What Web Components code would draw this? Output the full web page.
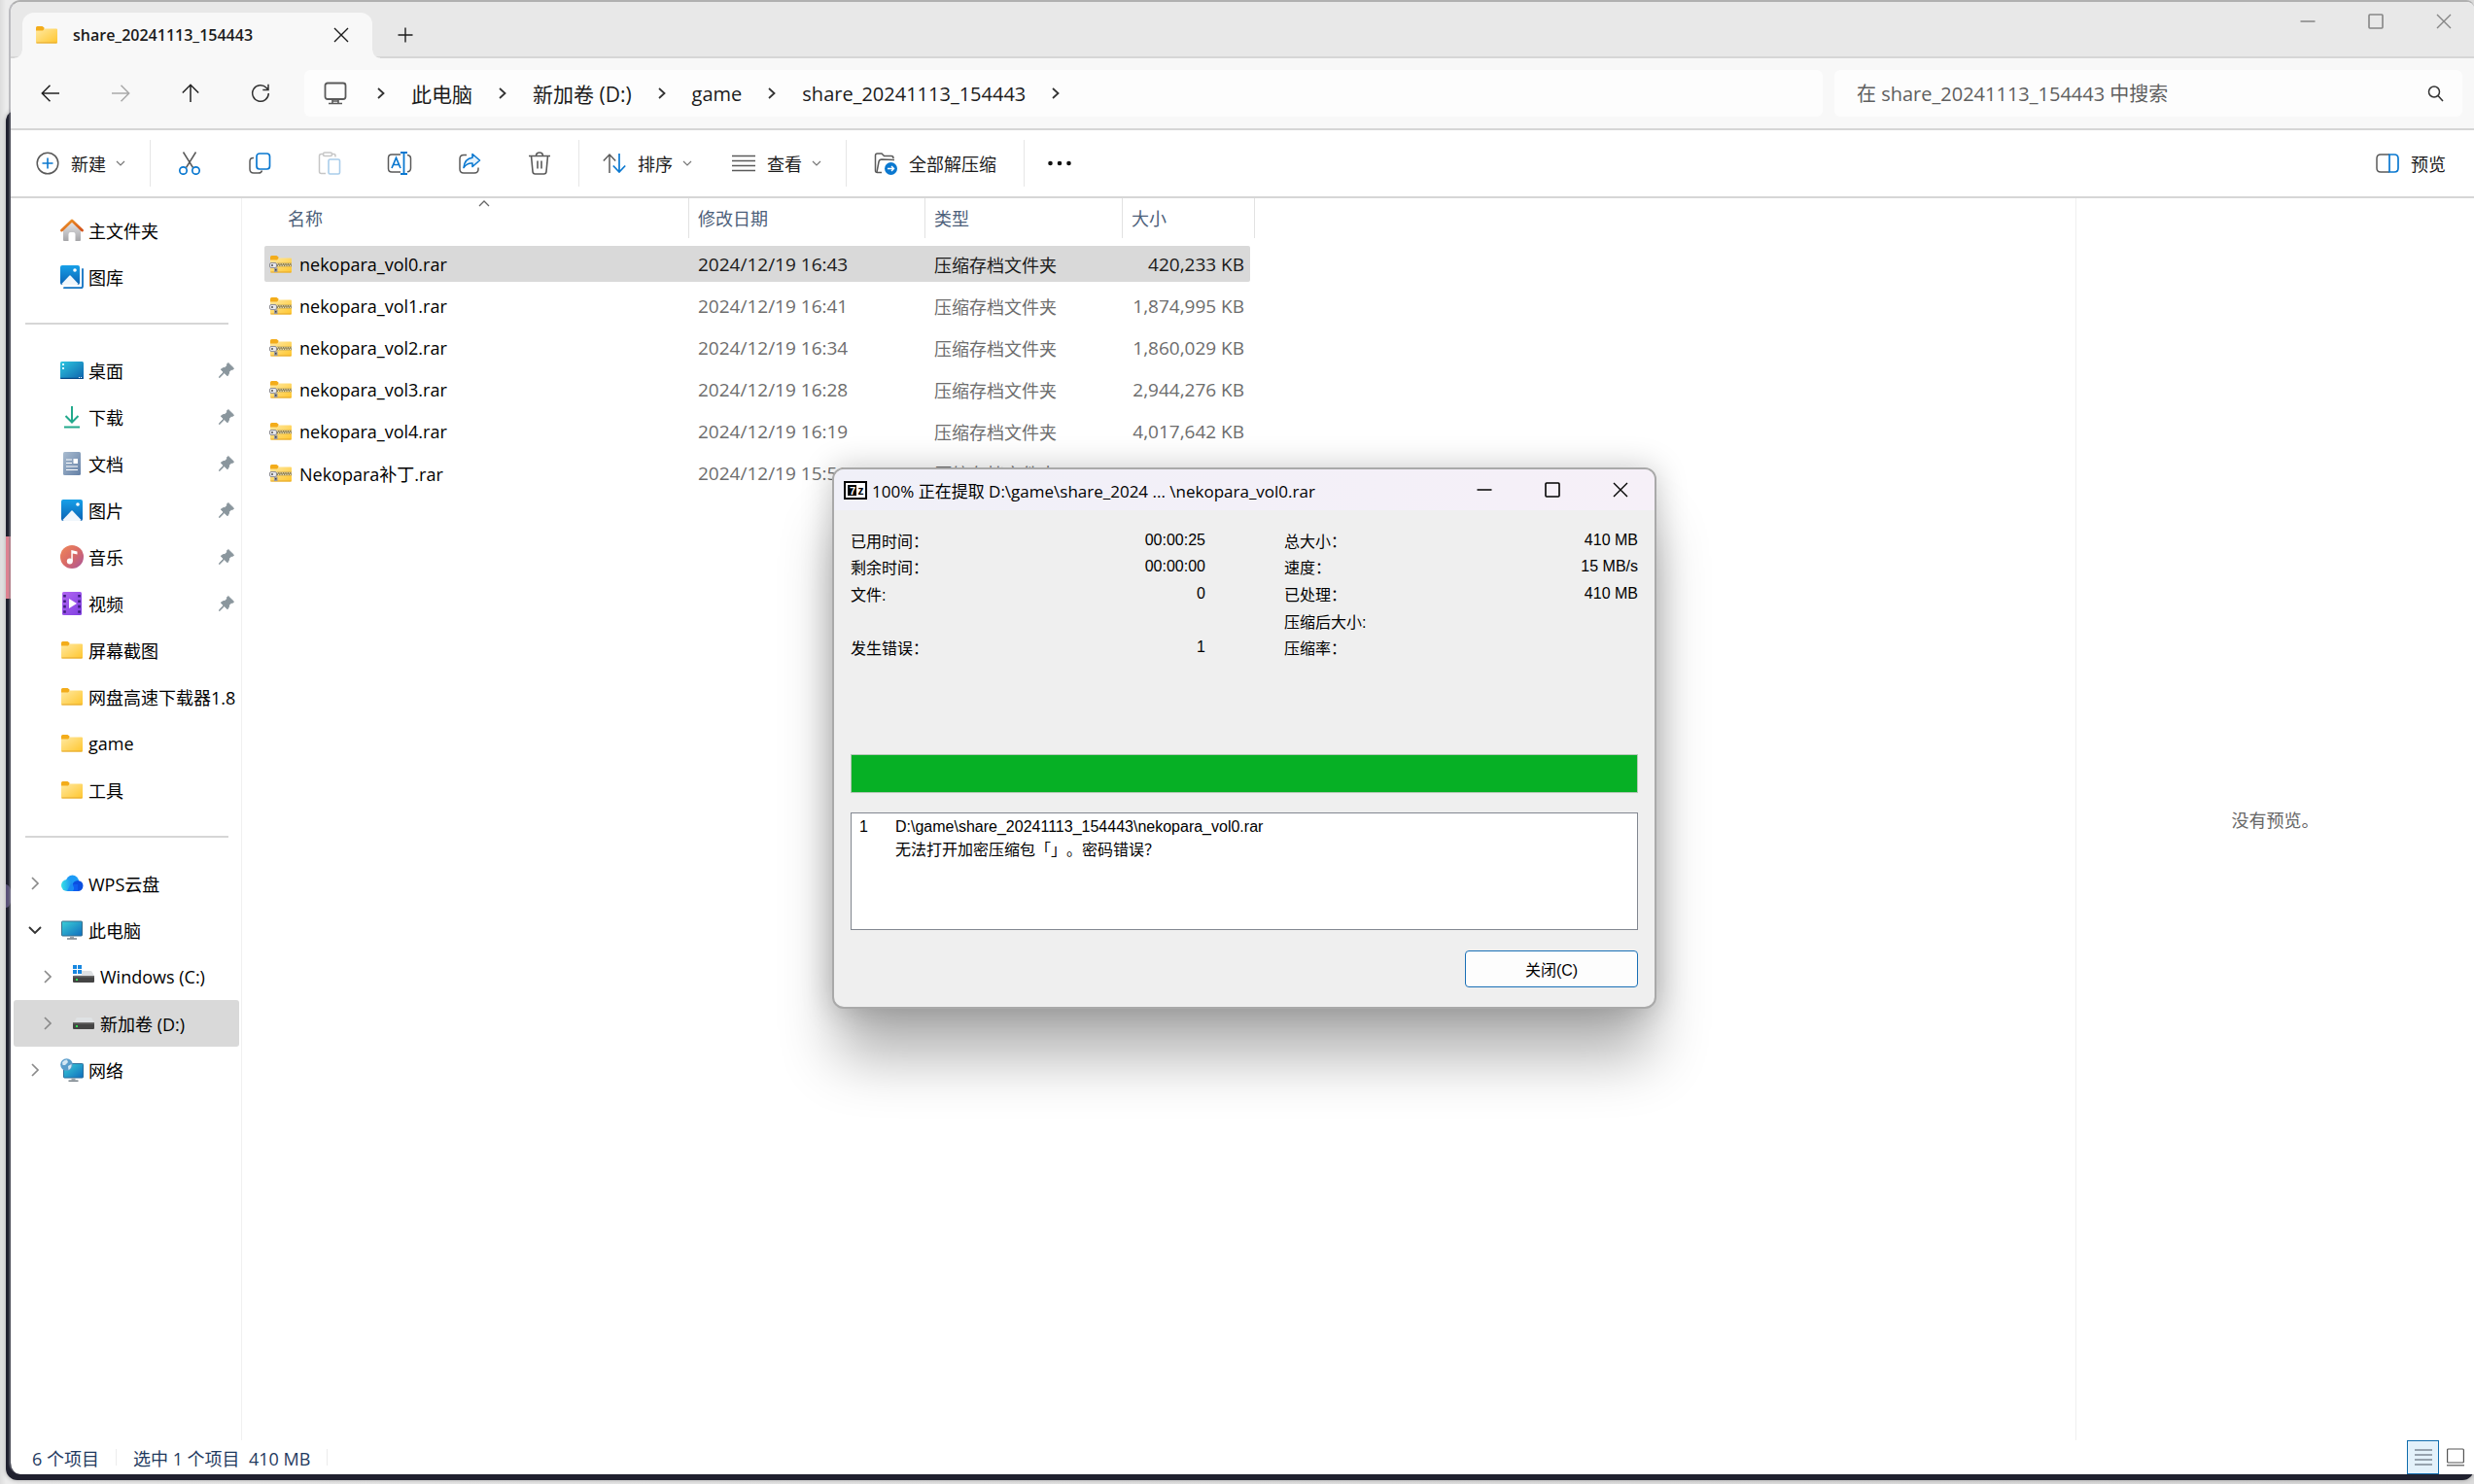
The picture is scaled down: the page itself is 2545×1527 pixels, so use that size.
<!DOCTYPE html>
<html lang="zh-CN">
<head>
<meta charset="utf-8">
<title>share_20241113_154443</title>
<style>
  html, body { margin: 0; height: 100%; }
  body {
    font-family: "Open Sans", "Noto Sans CJK SC", sans-serif;
    font-size: 18px; color: #1b1b1b;
    background: #dedede;
    overflow: hidden;
  }
</style>
</head>
<body>
<desktop-stage>
  <explorer-window>
    <explorer-titlebar slot="title">share_20241113_154443</explorer-titlebar>
    <explorer-navbar slot="nav"></explorer-navbar>
    <explorer-toolbar slot="tools"></explorer-toolbar>
    <explorer-sidebar slot="side"></explorer-sidebar>
    <file-table slot="main"></file-table>
    <preview-pane slot="preview">没有预览。</preview-pane>
    <status-bar slot="status"></status-bar>
  </explorer-window>
  <extract-dialog slot="dialog">100% 正在提取 D:\game\share_2024 ... \nekopara_vol0.rar</extract-dialog>
</desktop-stage>

<script>
const BASE = `*,:host{box-sizing:border-box}
button{font:inherit;color:inherit;background:none;border:0;padding:0;margin:0;display:flex;align-items:center;justify-content:center}
a{color:inherit;text-decoration:none}`;

function define(name, css, html) {
  customElements.define(name, class extends HTMLElement {
    constructor() {
      super();
      const root = this.attachShadow({ mode: 'open' });
      const t = document.createElement('template');
      t.innerHTML = `<style>${BASE}${css}</style>${html}`;
      root.append(t.content.cloneNode(true));
    }
  });
}

/* ---------- icons: [width, height, markup] ---------- */
const G = '#5a5a5a', B = '#0a78d0';
const folderBody = `<defs><linearGradient id="f" x1="0" y1="0" x2="1" y2="1"><stop offset="0" stop-color="#ffe9a2"/><stop offset="1" stop-color="#ffc62e"/></linearGradient></defs>
<path d="M0 1.500Q0 0 1.500 0H6.500L8.500 1.500V5H0Z" fill="#f3ac1a"/>
<path d="M0 4.500H7L9 2.500H21Q22 2.500 22 3.500V16.500Q22 17.500 21 17.500H1Q0 17.500 0 16.500Z" fill="url(#f)"/><path d="M.5 17H21.500" stroke="#e2a52b" stroke-width="1"/>`;
const picture = (s) => `<defs><linearGradient id="p" x1="0" y1="0" x2="0" y2="1"><stop offset="0" stop-color="#17a0e8"/><stop offset="1" stop-color="#0a62b4"/></linearGradient></defs>
<rect x="1" y="1" width="${s}" height="${s}" rx="2" fill="url(#p)"/><path d="M2.500 ${s}L${s / 2 + .500} ${s / 2 + 1.500}Q${s / 2 + 1} ${s / 2 + 1} ${s / 2 + 1.500} ${s / 2 + 1.500}L${s - .500} ${s}Q${s - 1} ${s + 1} ${s - 2} ${s + 1}H4Q3 ${s + 1} 2.500 ${s}Z" fill="#f0f6fc"/><circle cx="${s - 4}" cy="6" r="1.800" fill="#fff"/>`;
const drive = `<path d="M1 10L4 5H19L22 10Z" fill="#dfe2e4"/><rect x="0" y="10" width="22" height="7" rx="1" fill="#444"/><rect x="0" y="10" width="22" height="1.500" fill="#6c6c6c"/><rect x="3" y="13" width="2" height="2" fill="#32e052"/>`;
const monitor = `<defs><linearGradient id="m" x1="0" y1="0" x2="1" y2="1"><stop offset="0" stop-color="#3bd0d8"/><stop offset="1" stop-color="#0f6cbd"/></linearGradient></defs>`;
const ICONS = {
  folder: [22, 18, folderBody],
  rar: [24, 18, `<g transform="translate(1 0)">${folderBody}</g>
    <path d="M8 9.500H23" stroke="#8a7a48" stroke-width="3.500"/><path d="M8 8.800H23M9 10.400H23" stroke="#efe7c4" stroke-width="1.100" stroke-dasharray="1.200 1.200"/>
    <rect x=".5" y="7.500" width="7" height="5" rx="1.500" fill="#e7e7ea" stroke="#8f8f96"/><rect x="2" y="9" width="2" height="2" fill="#777"/><path d="M5 12.500h3.500v4.500H5z" fill="#9a9aa0"/><rect x="6" y="14" width="1.500" height="1.500" fill="#444"/>`],
  home: [24, 24, `<defs><linearGradient id="h" x1="0" y1="0" x2="0" y2="1"><stop offset="0" stop-color="#e4e4e6"/><stop offset="1" stop-color="#a5a5a8"/></linearGradient><linearGradient id="r" x1="0" y1="0" x2="1" y2="1"><stop offset="0" stop-color="#f09a2a"/><stop offset="1" stop-color="#d2521a"/></linearGradient></defs>
    <path d="M3 12L12 4L21 12V22Q21 23 20 23H15.500V16Q15.500 14 13.500 14H10.500Q8.500 14 8.500 16V23H4Q3 23 3 22Z" fill="url(#h)"/><path d="M1.500 12L12 2L22.500 12" fill="none" stroke="url(#r)" stroke-width="2.800" stroke-linecap="round" stroke-linejoin="round"/>`],
  gallery: [24, 24, `<path d="M23 4V21.500Q23 23.200 21.500 23.200H4" fill="none" stroke="#1172c2" stroke-width="1.800" stroke-linecap="round"/><g transform="translate(-1 -1)">${picture(20)}</g>`],
  pictures: [24, 24, picture(22)],
  desktop: [24, 18, `<defs><linearGradient id="d" x1="0" y1="0" x2="1" y2="1"><stop offset="0" stop-color="#2fc7e0"/><stop offset="1" stop-color="#0d62ac"/></linearGradient></defs><rect width="24" height="18" rx="1.500" fill="url(#d)"/><path d="M2 2h2v2H2zM2 6h2v2H2z" fill="#d8fbff"/><path d="M0 16.800H24V17Q24 18 23 18H1Q0 18 0 17Z" fill="#0b4a86"/><path d="M19 16.500h1M21 16.500h1" stroke="#fff"/>`],
  download: [24, 24, `<g fill="none" stroke="#22a98c" stroke-width="2"><path d="M12 1V17M5.500 11L12 17.500L18.500 11M4 22.500H20"/></g>`],
  document: [24, 24, `<defs><linearGradient id="o" x1="0" y1="0" x2="1" y2="1"><stop offset="0" stop-color="#a9bcd0"/><stop offset="1" stop-color="#6480a6"/></linearGradient></defs><rect x="3" y="0" width="18" height="24" rx="1.500" fill="url(#o)"/><path d="M6 8H12M6 11.500H12M6 15H18M6 18.500H18" stroke="#fff" stroke-width="1.200"/><rect x="13.500" y="7" width="4.500" height="5" fill="#fff"/>`],
  music: [24, 24, `<defs><linearGradient id="u" x1="0" y1="0" x2="1" y2="1"><stop offset="0" stop-color="#f0895a"/><stop offset=".5" stop-color="#d96a66"/><stop offset="1" stop-color="#a8569e"/></linearGradient></defs><circle cx="12" cy="12" r="12" fill="url(#u)"/><circle cx="9.800" cy="16.500" r="3" fill="#fff"/><path d="M11.300 5V16.500H12.800V8.500L17.500 9.500V6.500Z" fill="#fff"/>`],
  video: [24, 24, `<defs><linearGradient id="v" x1="0" y1="0" x2="1" y2="1"><stop offset="0" stop-color="#b266f2"/><stop offset="1" stop-color="#7f3fe0"/></linearGradient></defs><rect x="2" y="0" width="20" height="24" rx="1.500" fill="url(#v)"/><path d="M4.500 3V24M19.500 3V24" stroke="#3d1d80" stroke-width="2.600" stroke-dasharray="2.600 2.800"/><path d="M9 7L17 12L9 17Z" fill="#fff"/>`],
  cloud: [24, 18, `<defs><linearGradient id="c" x1="0" y1="0" x2="1" y2="0"><stop offset="0" stop-color="#35e0e6"/><stop offset="1" stop-color="#1b8cf2"/></linearGradient></defs><circle cx="12.500" cy="7" r="6.500" fill="#1c9bf6"/><circle cx="18" cy="11.500" r="5.500" fill="#0b4fe0"/><path d="M9 10H18V17H9Z" fill="#0f5ef0"/><circle cx="7" cy="11" r="6" fill="url(#c)"/><path d="M7 17L13 17Q16 13 11 9Z" fill="#1b8cf2"/>`],
  pc: [24, 20, `${monitor}<rect x="1.500" y="1" width="21" height="15" rx=".8" fill="url(#m)" stroke="#3b6f8c"/><path d="M10 16.500h4v2h-4z" fill="#9aa4ab"/><path d="M7 19H17" stroke="#6d7880" stroke-width="1.400"/>`],
  network: [24, 24, `${monitor}<rect x="3.500" y="5.500" width="20" height="14.500" rx=".8" fill="url(#m)" stroke="#2c6f9c"/><path d="M11.500 20.500h4v2h-4z" fill="#9aa4ab"/><path d="M8.500 23.200H18.500" stroke="#6d7880" stroke-width="1.400"/><circle cx="6.500" cy="6.500" r="6.300" fill="#5b9dcb"/><path d="M2 4Q4 1 7 1.500L8 4L5 7L2.500 7ZM8 8L11.500 6Q12 10 8.500 12Z" fill="#d3e6f3"/>`],
  windrive: [24, 24, `<g transform="translate(1 1)">${drive}</g><path d="M0 0H10V10H0Z" fill="#fff"/><path d="M1 0h4v4H1zM6 0h4v4H6zM1 5h4v4H1zM6 5h4v4H6z" fill="#1787e0"/>`],
  drive: [24, 24, `<g transform="translate(1 1)">${drive}</g>`],
  pin: [18, 18, `<path d="M10.800 1.500L16.500 7L15.200 8.500Q14.200 8 13.500 8.700L11.800 10.400Q11.500 13 10 14.800L6.800 11.600L2.200 16.200L1.500 16.500L1.700 15.500L6.100 11L3.300 8.100Q5 6.500 7.500 6.300L9.200 4.600Q9.900 3.800 9.500 2.800Z" fill="#8a969d" stroke="#8a969d" stroke-linejoin="round"/>`],
  back: [20, 20, `<path d="M19 10H1.500M9.500 1.800L1.300 10L9.500 18.200" fill="none" stroke="#222" stroke-width="1.500"/>`],
  forward: [20, 20, `<path d="M1 10H18.500M10.500 1.800L18.700 10L10.500 18.200" fill="none" stroke="#a9a9a9" stroke-width="1.500"/>`],
  up: [20, 20, `<path d="M10 19V1.500M1.800 9.500L10 1.300L18.200 9.500" fill="none" stroke="#222" stroke-width="1.500"/>`],
  refresh: [20, 20, `<path d="M18.300 10A8.300 8.300 0 1 1 16 4.200L18 6.200M18 .8V6.500H12.300" fill="none" stroke="#333" stroke-width="1.500"/>`],
  monitor: [24, 24, `<rect x="1.500" y="1.500" width="21" height="16.500" rx="2.500" fill="none" stroke="${G}" stroke-width="1.800"/><path d="M9 18v4M15 18v4M5 22.500H19M9 20H15" stroke="${G}" stroke-width="1.600"/>`],
  chevron: [14, 14, `<path d="M4 2L9.500 7L4 12" fill="none" stroke="#333" stroke-width="1.800"/>`],
  treeclosed: [14, 14, `<path d="M4 1L10 7L4 13" fill="none" stroke="#8a8a8a" stroke-width="1.700"/>`],
  treeopen: [14, 14, `<path d="M1 4L7 10L13 4" fill="none" stroke="#333" stroke-width="1.900"/>`],
  caret: [12, 12, `<path d="M2 4L6 8L10 4" fill="none" stroke="#777" stroke-width="1.200"/>`],
  sorted: [12, 8, `<path d="M1 7L6 2L11 7" fill="none" stroke="#666" stroke-width="1.300"/>`],
  close: [16, 16, `<path d="M1 1L15 15M15 1L1 15" stroke="currentColor" stroke-width="1.400"/>`],
  max: [16, 16, `<rect x="1" y="1" width="14" height="14" rx="1" fill="none" stroke="currentColor" stroke-width="1.600"/>`],
  min: [16, 16, `<path d="M.5 8H15.500" stroke="currentColor" stroke-width="1.300"/>`],
  plus: [16, 16, `<path d="M8 .5V15.500M.5 8H15.500" stroke="currentColor" stroke-width="1.400"/>`],
  search: [18, 18, `<circle cx="8" cy="7.500" r="5.500" fill="none" stroke="#333" stroke-width="1.500"/><path d="M12 11.500L17 17" stroke="#333" stroke-width="1.600"/>`],
  add: [24, 24, `<circle cx="12" cy="12" r="10.800" fill="none" stroke="${G}" stroke-width="1.500"/><path d="M12 6.500V17.500M6.500 12H17.500" stroke="${B}" stroke-width="1.600"/>`],
  cut: [24, 24, `<path d="M5.500 .5L15.500 16.500M18.500 .5L8.500 16.500" stroke="${G}" stroke-width="1.500"/><circle cx="5.500" cy="19.500" r="3.700" fill="none" stroke="${B}" stroke-width="1.700"/><circle cx="18.500" cy="19.500" r="3.700" fill="none" stroke="${B}" stroke-width="1.700"/>`],
  copy: [24, 24, `<path d="M6 6.500H5.500Q2 6.500 2 10V18Q2 22 6 22H11Q14 22 14.500 19.500" fill="none" stroke="${G}" stroke-width="1.500"/><rect x="9" y="2" width="13.500" height="16" rx="3" fill="none" stroke="${B}" stroke-width="1.700"/>`],
  paste: [24, 24, `<path d="M8 22.500H3.500Q1.500 22.500 1.500 20.500V4.500Q1.500 2.500 3.500 2.500H5M15 2.500H16.500Q18 2.500 18 4.500V5.500" fill="none" stroke="#c6c6c6" stroke-width="1.500"/><rect x="5.500" y="1" width="9" height="3.500" rx="1.500" fill="none" stroke="#c6c6c6" stroke-width="1.500"/><rect x="11" y="8" width="11.500" height="15" rx="1.500" fill="none" stroke="#a9cdea" stroke-width="1.600"/>`],
  rename: [26, 24, `<path d="M14 3H5Q1.500 3 1.500 6.500V17.500Q1.500 21 5 21H14M21 3.500Q24.500 4 24.500 7V17Q24.500 20.500 21 20.800" fill="none" stroke="${G}" stroke-width="1.500"/><path d="M14 1H21M14 23H21M17.500 1V23" stroke="${B}" stroke-width="1.800"/><path d="M5 17L9.500 6.500L14 17M6.500 13.500H12.500" fill="none" stroke="${B}" stroke-width="1.700"/>`],
  share: [24, 24, `<path d="M9 3.500H6Q2 3.500 2 7.500V18Q2 22 6 22H17Q21 22 21 18V16.500" fill="none" stroke="${G}" stroke-width="1.500"/><path d="M15 2.500L22.500 9L15 15.500V12Q9.500 11.500 6 16.500Q7 7 15 6.200Z" fill="#e4f2fd" stroke="${B}" stroke-width="1.600" stroke-linejoin="round"/>`],
  trash: [24, 24, `<path d="M1 4.500H23M8.500 4.500Q8.500 1 12 1Q15.500 1 15.500 4.500M3.500 4.500L5 20.500Q5.200 23 7.500 23H16.500Q18.800 23 19 20.500L20.500 4.500M10 9.500V17.500M14 9.500V17.500" fill="none" stroke="${G}" stroke-width="1.600"/>`],
  sort: [24, 24, `<path d="M7 22V3.500M.8 9.500L7 3L13.200 9.500" fill="none" stroke="${G}" stroke-width="1.500"/><path d="M17 2V20.500M10.800 14.500L17 21L23.200 14.500" fill="none" stroke="${B}" stroke-width="1.700"/>`],
  view: [24, 24, `<path d="M0 4.500H24M0 9.500H24M0 14.500H24M0 19.500H24" stroke="${G}" stroke-width="1.500"/>`],
  extract: [24, 24, `<path d="M8 21.500H3.500Q1.500 21.500 1.500 19.500V4Q1.500 2 3.500 2H8L10.500 4.500H18Q20 4.500 20 7" fill="none" stroke="${G}" stroke-width="1.500"/><path d="M3 21L5 10.500Q5.500 8 8 8L21 8.500" fill="none" stroke="${G}" stroke-width="1.500"/><circle cx="17.500" cy="17.500" r="6.500" fill="${B}"/><path d="M14 17.500H20.500M18 15L20.500 17.500L18 20" fill="none" stroke="#fff" stroke-width="1.400"/>`],
  more: [26, 6, `<circle cx="3.500" cy="3" r="2.300" fill="#111"/><circle cx="13" cy="3" r="2.300" fill="#111"/><circle cx="22.500" cy="3" r="2.300" fill="#111"/>`],
  preview: [24, 20, `<path d="M14 1H5Q1 1 1 5V15Q1 19 5 19H14" fill="none" stroke="${G}" stroke-width="1.500"/><path d="M14 1H19Q23 1 23 5V15Q23 19 19 19H14Z" fill="none" stroke="${B}" stroke-width="1.700"/>`],
  details: [18, 17, `<path d="M0 1H18M0 6H18M0 11H18M0 16H18" stroke="#4a5560" stroke-width="1.200"/>`],
  large: [18, 19, `<rect x=".6" y="1" width="16.800" height="14" rx="1" fill="none" stroke="#555" stroke-width="1.200"/><path d="M0 17.800H18" stroke="#555" stroke-width="1.200"/>`],
  sevenzip: [24, 19, `<rect x="1" y="1" width="22" height="17" fill="#fff" stroke="#000" stroke-width="2"/><rect x="4" y="4" width="9" height="11" fill="#000"/><text x="6" y="13.500" font-family="Liberation Sans" font-weight="700" font-size="11" fill="#fff">7</text><text x="14.500" y="14" font-family="Liberation Sans" font-weight="700" font-size="12" fill="#000">z</text>`]
};

customElements.define('ui-icon', class extends HTMLElement {
  constructor() { super(); this.attachShadow({ mode: 'open' }); }
  connectedCallback() {
    const [w, h, body] = ICONS[this.getAttribute('name')];
    this.shadowRoot.innerHTML = `<style>:host{display:inline-flex;flex:none}svg{display:block}</style><svg width="${w}" height="${h}" viewBox="0 0 ${w} ${h}" aria-hidden="true">${body}</svg>`;
  }
});

/* ---------- desktop and window frame ---------- */
define('desktop-stage', `
:host{display:block;position:relative;height:100vh;padding:0 0 10px 9px;background:linear-gradient(90deg,#ddd,#ececec 6px,#dadada)}
.behind{position:absolute;left:6px;right:0;top:113px;bottom:4px;border-radius:12px;background:#20212f;box-shadow:0 0 5px rgba(0,0,0,.3);overflow:hidden}
.behind i{position:absolute;left:0;top:439px;width:5px;height:64px;background:#dd8191}
.behind b{position:absolute;left:-6px;top:797px;width:12px;height:24px;border-radius:50%;background:#5a5278}
.app{position:relative;height:100%}`,
`<div class="behind"><i></i><b></b></div><div class="app"><slot></slot></div><slot name="dialog"></slot>`);

define('explorer-window', `
:host{display:flex;flex-direction:column;height:100%;border-top:2px solid #b0b0b0;border-left:2px solid rgba(130,130,140,.45);border-radius:12px 8px 0 12px;overflow:hidden;background:#fff;background-clip:padding-box}
.body{flex:1;min-height:0;display:flex}
::slotted([slot=main]){flex:1;min-width:0}`,
`<slot name="title"></slot><slot name="nav"></slot><slot name="tools"></slot>
<div class="body"><slot name="side"></slot><slot name="main"></slot><slot name="preview"></slot></div><slot name="status"></slot>`);

define('explorer-titlebar', `
:host{display:flex;align-items:flex-end;height:58px;flex:none;background:#e8e8e8;border-bottom:2px solid #d6d6d6}
.tab{position:relative;display:flex;align-items:center;width:360px;height:47px;margin:0 0 -2px 12px;padding:0 24px 2px 14px;background:#f8f8f8;border-radius:12px 12px 0 0;font-size:16px;font-weight:600}
.tab::before,.tab::after{content:"";position:absolute;bottom:0;width:8px;height:8px}
.tab::before{left:-8px;background:radial-gradient(circle at 0 0,transparent 7px,#f8f8f8 8px)}
.tab::after{right:-8px;background:radial-gradient(circle at 100% 0,transparent 7px,#f8f8f8 8px)}
.name{flex:1;padding-left:16px}
.add{width:40px;height:40px;margin:0 auto 2px 14px}
.win{align-self:flex-start;display:flex;gap:8px;color:#858585}
.win button{width:62px;height:40px}`,
`<div class="tab"><ui-icon name="folder"></ui-icon><span class="name"><slot></slot></span><button aria-label="关闭标签页"><ui-icon name="close"></ui-icon></button></div>
<button class="add" aria-label="新标签页"><ui-icon name="plus"></ui-icon></button>
<div class="win"><button aria-label="最小化"><ui-icon name="min"></ui-icon></button><button aria-label="最大化"><ui-icon name="max"></ui-icon></button><button aria-label="关闭"><ui-icon name="close"></ui-icon></button></div>`);

define('explorer-navbar', `
:host{display:flex;align-items:center;height:74px;flex:none;padding:0 12px 0 5px;background:#f8f8f8;border-bottom:2px solid #d6d6d6}
.go{width:72px;height:48px}
.path{flex:1;display:flex;align-items:center;height:48px;margin:0 12px 0 9px;padding-left:20px;background:#fdfdfd;border-radius:6px;font-size:21px}
.path>ui-icon:first-child{margin-right:4px}
.path .en{font-size:20px}
.path ui-icon[name=chevron]{margin:0 24px}
.search{display:flex;align-items:center;width:646px;height:48px;background:#fdfdfd;border-radius:6px;padding:0 19px 0 23px}
input{flex:1;min-width:0;border:0;outline:0;padding:0;background:none;font:inherit;font-size:20px;color:#1b1b1b}
input::placeholder{color:#5f5f5f;opacity:1}`,
`<button class="go" aria-label="后退"><ui-icon name="back"></ui-icon></button><button class="go" aria-label="前进"><ui-icon name="forward"></ui-icon></button><button class="go" aria-label="上移"><ui-icon name="up"></ui-icon></button><button class="go" aria-label="刷新"><ui-icon name="refresh"></ui-icon></button>
<nav class="path"><ui-icon name="monitor"></ui-icon><ui-icon name="chevron"></ui-icon><a href="#">此电脑</a><ui-icon name="chevron"></ui-icon><a href="#">新加卷 (D:)</a><ui-icon name="chevron"></ui-icon><a class="en" href="#">game</a><ui-icon name="chevron"></ui-icon><a class="en" href="#">share_20241113_154443</a><ui-icon name="chevron"></ui-icon></nav>
<div class="search"><input type="search" aria-label="搜索" placeholder="在 share_20241113_154443 中搜索"><ui-icon name="search"></ui-icon></div>`);

customElements.define('tool-button', class extends HTMLElement {
  constructor() { super(); this.attachShadow({ mode: 'open' }); }
  connectedCallback() {
    const labelled = this.childNodes.length > 0;
    this.shadowRoot.innerHTML = `<style>${BASE}:host{display:flex}
button{height:48px;${labelled ? 'padding:0 20px' : 'width:72px'}}
.t{padding-left:12px}ui-icon[name=caret]{margin-left:9px}</style>
<button aria-label="${this.getAttribute('label') || ''}"><ui-icon name="${this.getAttribute('icon')}"></ui-icon>${labelled ? '<span class="t"><slot></slot></span>' : ''}${this.hasAttribute('menu') ? '<ui-icon name="caret"></ui-icon>' : ''}</button>`;
  }
});

define('explorer-toolbar', `
:host{display:flex;align-items:center;height:70px;flex:none;padding-left:6px;border-bottom:2px solid #d6d6d6;background:#fff}
hr{width:1px;height:48px;border:0;margin:0 4px;background:#e6e6e6}
hr:last-of-type{margin-right:0}
.wide{display:flex;padding:0 4px}
.end{margin-left:auto;padding-right:9px}`,
`<tool-button icon="add" label="新建" menu>新建</tool-button><hr>
<tool-button icon="cut" label="剪切"></tool-button><tool-button icon="copy" label="复制"></tool-button><tool-button icon="paste" label="粘贴"></tool-button><tool-button icon="rename" label="重命名"></tool-button><tool-button icon="share" label="共享"></tool-button><tool-button icon="trash" label="删除"></tool-button><hr>
<tool-button icon="sort" label="排序" menu>排序</tool-button><tool-button icon="view" label="查看" menu>查看</tool-button><hr>
<div class="wide"><tool-button icon="extract" label="全部解压缩">全部解压缩</tool-button></div><hr>
<tool-button icon="more" label="更多"></tool-button>
<div class="end"><tool-button icon="preview" label="预览">预览</tool-button></div>`);

/* ---------- sidebar ---------- */
define('nav-item', `
:host{display:flex;align-items:center;height:48px;padding-left:15px;margin:0 2px 0 3px;border-radius:3px;color:#000;white-space:nowrap}
:host([child]){padding-left:28px}
:host([selected]){background:#d9d9d9}
.tw{width:14px;display:flex;flex:none;margin-right:19px}
:host([child]) .tw{margin-right:18px}
.ic{width:24px;display:flex;justify-content:center;flex:none}
a{flex:1;padding-left:5px}
.pin{margin-right:4px;display:flex}`,
`<span class="tw"><slot name="twisty"></slot></span><span class="ic"><slot name="icon"></slot></span><a href="#"><slot></slot></a><span class="pin"><slot name="pin"></slot></span>`);

const item = (icon, text, o = {}) => `<nav-item ${o.attr || ''}>${o.tw ? `<ui-icon slot="twisty" name="${o.tw}"></ui-icon>` : ''}<ui-icon slot="icon" name="${icon}"></ui-icon>${text}${o.pin ? '<ui-icon slot="pin" name="pin"></ui-icon>' : ''}</nav-item>`;
const P = { pin: true }, C = { tw: 'treeclosed' };
define('explorer-sidebar', `
:host{display:block;flex:none;width:238px;padding-top:9px;border-right:1px solid #f0f0f0;background:#fff;overflow:hidden}
hr{height:2px;border:0;background:#d6d6d6;margin:23px 13px 23px 15px}`,
item('home', '主文件夹') + item('gallery', '图库') + '<hr>' +
item('desktop', '桌面', P) + item('download', '下载', P) + item('document', '文档', P) + item('pictures', '图片', P) + item('music', '音乐', P) + item('video', '视频', P) +
item('folder', '屏幕截图') + item('folder', '网盘高速下载器1.8') + item('folder', 'game') + item('folder', '工具') + '<hr>' +
item('cloud', 'WPS云盘', C) + item('pc', '此电脑', { tw: 'treeopen' }) +
item('windrive', 'Windows (C:)', { tw: 'treeclosed', attr: 'child' }) + item('drive', '新加卷 (D:)', { tw: 'treeclosed', attr: 'child selected' }) + item('network', '网络', C));

/* ---------- file list ---------- */
const FILES = [
  ['nekopara_vol0.rar', '16:43', '420,233'], ['nekopara_vol1.rar', '16:41', '1,874,995'],
  ['nekopara_vol2.rar', '16:34', '1,860,029'], ['nekopara_vol3.rar', '16:28', '2,944,276'],
  ['nekopara_vol4.rar', '16:19', '4,017,642'], ['Nekopara补丁.rar', '15:51', '5,490,905']
];
define('file-table', `
:host{display:block;padding-left:23px}
table{display:block;width:1019px}
thead,tbody{display:block}
tr{display:grid;grid-template-columns:437px 243px 203px 1fr;align-items:center}
th{position:relative;height:41px;text-align:left;font-weight:400;color:#4c607a;padding:0 0 0 9px;line-height:42px;border-right:1px solid #e2e2e2}
th:first-child{padding-left:24px}
th ui-icon{position:absolute;left:220px;top:1px}
tbody{padding-top:8px}
tbody tr{height:37px;margin:0 5px 6px 0;border-radius:2px;color:#6d6d6d}
tbody tr[aria-selected]{background:#d9d9d9;color:#1b1b1b}
td{padding:0 0 0 9px;white-space:nowrap}
td:first-child{display:flex;align-items:center;padding-left:5px;color:#000}
td:first-child span{padding-left:7px}
.num{font-size:19px}
td:last-child{text-align:right;padding:0 6px 0 0}`,
`<table><thead><tr><th>名称<ui-icon name="sorted"></ui-icon></th><th>修改日期</th><th>类型</th><th>大小</th></tr></thead><tbody>` +
FILES.map((f, i) => `<tr${i ? '' : ' aria-selected="true"'}><td><ui-icon name="rar"></ui-icon><span>${f[0]}</span></td><td class="num">2024/12/19 ${f[1]}</td><td>压缩存档文件夹</td><td class="num">${f[2]} KB</td></tr>`).join('') + `</tbody></table>`);

define('preview-pane', `
:host{display:flex;align-items:center;justify-content:center;flex:none;width:410px;border-left:1px solid #f0f0f0;color:#666}`, `<slot></slot>`);

define('status-bar', `
:host{display:flex;align-items:center;height:35px;flex:none;padding:0 10px 0 22px;color:#1f3a60}
i{width:1px;height:17px;background:#ececec;margin:0 17px}
.v{display:flex;align-items:center;margin-left:auto;gap:8px}
.v button{width:18px;height:35px}
.v .on{width:33px;background:#e3f1fa;border:1px solid #0f6cad}`,
`<span>6 个项目</span><i></i><span>选中 1 个项目&nbsp; 410 MB</span><i></i>
<div class="v"><button class="on" aria-label="详细信息"><ui-icon name="details"></ui-icon></button><button aria-label="大图标"><ui-icon name="large"></ui-icon></button></div>`);

/* ---------- extraction dialog ---------- */
define('extract-dialog', `
:host{position:absolute;left:856px;top:481px;width:848px;display:flex;flex-direction:column;border:2px solid #a9a9a9;border-radius:12px;background:#efefef;color:#000;overflow:hidden;
 box-shadow:0 0 32px rgba(0,0,0,.22),0 56px 60px -6px rgba(0,0,0,.3)}
header{display:flex;align-items:center;height:42px;padding-left:10px;background:linear-gradient(90deg,#f0f0f8,#f6f0f8)}
h1{flex:1;margin:0;padding-left:5px;font-size:17px;font-weight:400;white-space:nowrap}
header button{width:70px;height:42px}
main{padding:17px 17px 20px;font:16px "Liberation Sans","Noto Sans CJK SC",sans-serif;text-spacing-trim:space-all}
.stats{display:grid;grid-template-columns:365px 364px;justify-content:space-between;height:138px}
dl{margin:0;display:flex;flex-direction:column}
dl div{flex:1;display:flex;align-items:center;justify-content:space-between}
dd{margin:0}
.bar{height:40px;margin-top:96px;border:1px solid #b4c8b6;background:#06b025}
.log{height:121px;margin-top:20px;border:1px solid #828790;background:#fff;padding:2px 8px;display:grid;grid-template-columns:37px 1fr;align-content:start;line-height:24px}
.log p{margin:0}
.ok{width:178px;height:38px;margin:21px 0 0 auto;border:1px solid #1a6fb5;border-radius:4px;background:#fdfdfd}`,
`<header><ui-icon name="sevenzip"></ui-icon><h1><slot></slot></h1><button aria-label="最小化"><ui-icon name="min"></ui-icon></button><button aria-label="最大化"><ui-icon name="max"></ui-icon></button><button aria-label="关闭"><ui-icon name="close"></ui-icon></button></header>
<main><div class="stats">
<dl><div><dt>已用时间：</dt><dd>00:00:25</dd></div><div><dt>剩余时间：</dt><dd>00:00:00</dd></div><div><dt>文件:</dt><dd>0</dd></div><div></div><div><dt>发生错误：</dt><dd>1</dd></div></dl>
<dl><div><dt>总大小：</dt><dd>410 MB</dd></div><div><dt>速度：</dt><dd>15 MB/s</dd></div><div><dt>已处理：</dt><dd>410 MB</dd></div><div><dt>压缩后大小:</dt></div><div><dt>压缩率：</dt></div></dl></div>
<div class="bar" role="progressbar" aria-valuenow="100" aria-label="进度"></div>
<div class="log"><span>1</span><div><p>D:\\game\\share_20241113_154443\\nekopara_vol0.rar</p><p>无法打开加密压缩包「」。密码错误？</p></div></div>
<button class="ok">关闭(C)</button></main>`);
</script>
</body>
</html>
